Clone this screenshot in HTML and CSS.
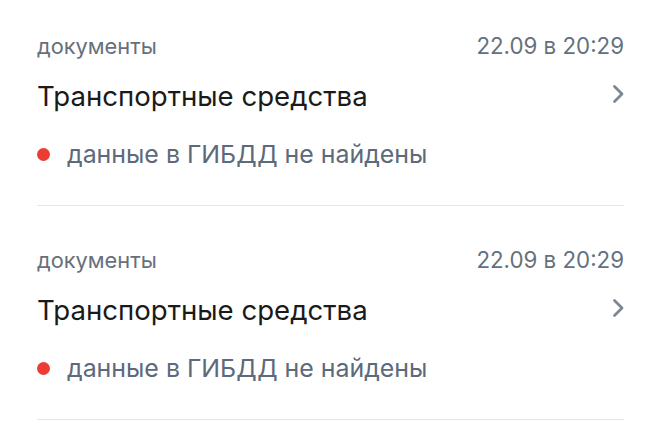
FILE: index.html
```html
<!DOCTYPE html>
<html lang="ru">
<head>
<meta charset="utf-8">
<link rel="stylesheet" href="styles.css">
</head>
<body>
<ul class="list">
  <li class="item">
    <div class="meta"><span class="category">документы</span><span class="date">22.09 в 20:29</span></div>
    <div class="title-row"><span class="title">Транспортные средства</span>
      <svg class="chevron" width="13" height="20" viewBox="0 0 13 20"><path d="M2.5 2.5 L10 10 L2.5 17.5" fill="none" stroke="#7c8694" stroke-width="2.8" stroke-linecap="round" stroke-linejoin="round"/></svg>
    </div>
    <div class="status"><span class="dot"></span><span class="status-text">данные в ГИБДД не найдены</span></div>
  </li>
  <li class="item">
    <div class="meta"><span class="category">документы</span><span class="date">22.09 в 20:29</span></div>
    <div class="title-row"><span class="title">Транспортные средства</span>
      <svg class="chevron" width="13" height="20" viewBox="0 0 13 20"><path d="M2.5 2.5 L10 10 L2.5 17.5" fill="none" stroke="#7c8694" stroke-width="2.8" stroke-linecap="round" stroke-linejoin="round"/></svg>
    </div>
    <div class="status"><span class="dot"></span><span class="status-text">данные в ГИБДД не найдены</span></div>
  </li>
</ul>
</body>
</html>
```

FILE: styles.css
```css
html, body {
  margin: 0;
  padding: 0;
  background: #ffffff;
}
body {
  font-family: "Inter", "Noto Sans", sans-serif;
  width: 660px;
}
.list {
  list-style: none;
  margin: 0;
  padding: 0 36px 0 37px;
}
.item {
  padding: 41px 0 36px;
  border-bottom: 1px solid #e4e7ea;
  display: flex;
  flex-direction: column;
}
.item:first-child {
  padding-top: 33px;
}
.meta {
  display: flex;
  justify-content: space-between;
  font-size: 21.8px;
  line-height: 26px;
  color: #66707c;
}
.date {
  font-size: 22.3px;
}
.title-row {
  margin-top: 20px;
  display: flex;
  justify-content: space-between;
  align-items: center;
}
.title {
  font-size: 27.6px;
  line-height: 34px;
  color: #1a1a1a;
}
.chevron {
  display: block;
  margin-right: -1px;
  margin-bottom: 4px;
}
.status {
  margin-top: 26px;
  display: flex;
  align-items: center;
  gap: 17px;
}
.dot {
  width: 13px;
  height: 13px;
  border-radius: 50%;
  background: #ee3b33;
  flex: none;
}
.status-text {
  font-size: 24.9px;
  line-height: 30px;
  color: #5c6a7b;
}
```
